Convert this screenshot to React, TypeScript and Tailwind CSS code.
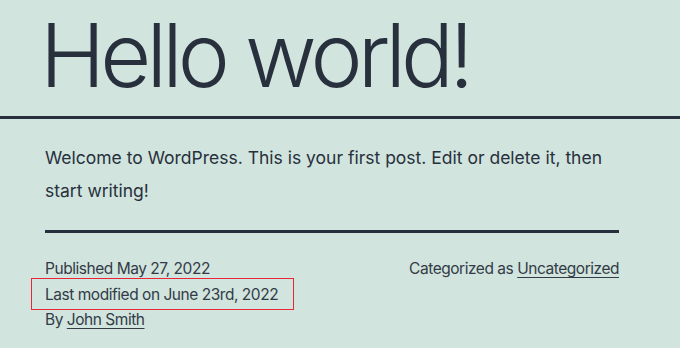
import React from "react";

export default function App() {
  return (
    <div className="relative w-[680px] h-[348px] overflow-hidden bg-[#d1e4dd] text-[#28303d] font-['Inter','Liberation_Sans',sans-serif]">
      <h1 className="pl-[40px] pt-[11px] text-[88px] font-light leading-none tracking-[-0.055em] whitespace-nowrap">
        Hello world!
      </h1>
      <div className="mt-[17px] h-[3px] bg-[#28303d]" />
      <div className="w-[574px] ml-[45px]">
        <p className="mt-[22px] text-[17.5px] leading-[33px]">
          Welcome to WordPress. This is your first post. Edit or delete it, then start writing!
        </p>
        <div className="mt-[23px] h-[3px] bg-[#28303d]" />
        <div className="mt-[23px] flex justify-between text-[15.5px] tracking-[-0.03em] leading-[25.6px] text-[#333b47]">
          <div className="flex flex-col">
            <span>Published May 27, 2022</span>
            <span>Last modified on June 23rd, 2022</span>
            <span>
              By <a className="underline underline-offset-[3px] decoration-1">John Smith</a>
            </span>
          </div>
          <div>
            Categorized as <a className="underline underline-offset-[3px] decoration-1">Uncategorized</a>
          </div>
        </div>
      </div>
      <div className="absolute left-[31px] top-[278px] w-[263px] h-[32px] border border-[#e8263a]" />
    </div>
  );
}
